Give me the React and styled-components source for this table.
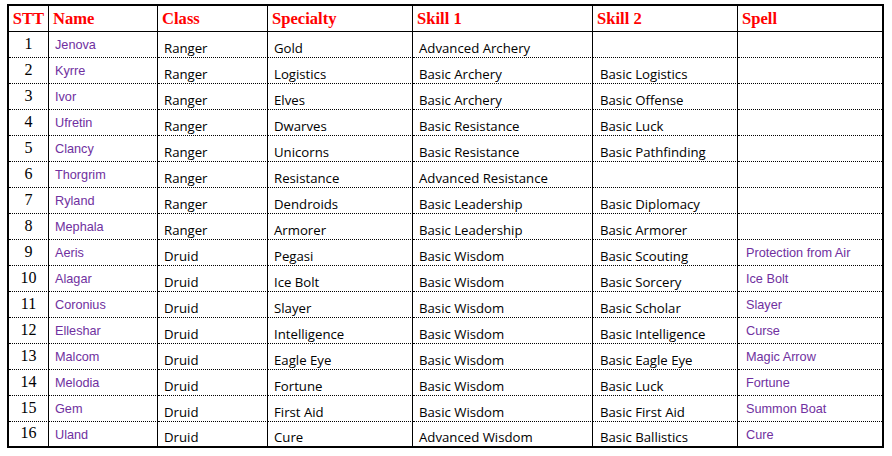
import styled, { createGlobalStyle } from "styled-components";

const GlobalStyle = createGlobalStyle`
  html, body {
    margin: 0;
    padding: 0;
    background: #fff;
  }
`;

const heroes = [
  ["Jenova", "Ranger", "Gold", "Advanced Archery", "", ""],
  ["Kyrre", "Ranger", "Logistics", "Basic Archery", "Basic Logistics", ""],
  ["Ivor", "Ranger", "Elves", "Basic Archery", "Basic Offense", ""],
  ["Ufretin", "Ranger", "Dwarves", "Basic Resistance", "Basic Luck", ""],
  ["Clancy", "Ranger", "Unicorns", "Basic Resistance", "Basic Pathfinding", ""],
  ["Thorgrim", "Ranger", "Resistance", "Advanced Resistance", "", ""],
  ["Ryland", "Ranger", "Dendroids", "Basic Leadership", "Basic Diplomacy", ""],
  ["Mephala", "Ranger", "Armorer", "Basic Leadership", "Basic Armorer", ""],
  ["Aeris", "Druid", "Pegasi", "Basic Wisdom", "Basic Scouting", "Protection from Air"],
  ["Alagar", "Druid", "Ice Bolt", "Basic Wisdom", "Basic Sorcery", "Ice Bolt"],
  ["Coronius", "Druid", "Slayer", "Basic Wisdom", "Basic Scholar", "Slayer"],
  ["Elleshar", "Druid", "Intelligence", "Basic Wisdom", "Basic Intelligence", "Curse"],
  ["Malcom", "Druid", "Eagle Eye", "Basic Wisdom", "Basic Eagle Eye", "Magic Arrow"],
  ["Melodia", "Druid", "Fortune", "Basic Wisdom", "Basic Luck", "Fortune"],
  ["Gem", "Druid", "First Aid", "Basic Wisdom", "Basic First Aid", "Summon Boat"],
  ["Uland", "Druid", "Cure", "Advanced Wisdom", "Basic Ballistics", "Cure"],
];

const headers = ["STT", "Name", "Class", "Specialty", "Skill 1", "Skill 2", "Spell"];

const App = () => {
  return (
    <Page>
      <GlobalStyle />
      <Sheet>
        {headers.map((h, i) => (
          <HeadCell key={h} $center={i === 0} $last={i === headers.length - 1}>
            {h}
          </HeadCell>
        ))}
        {heroes.map((row, r) => {
          const last = r === heroes.length - 1;
          const [name, cls, spec, skill1, skill2, spell] = row;
          return [
            <NumCell key={`n${r}`} $lastRow={last}>
              {r + 1}
            </NumCell>,
            <LinkCell key={`a${r}`} $lastRow={last}>
              {name}
            </LinkCell>,
            <TextCell key={`c${r}`} $lastRow={last}>
              {cls}
            </TextCell>,
            <TextCell key={`s${r}`} $lastRow={last}>
              {spec}
            </TextCell>,
            <TextCell key={`k1${r}`} $lastRow={last}>
              {skill1}
            </TextCell>,
            <TextCell key={`k2${r}`} $lastRow={last} $pad={7}>
              {skill2}
            </TextCell>,
            <LinkCell key={`p${r}`} $lastRow={last} $last $pad={8}>
              {spell}
            </LinkCell>,
          ];
        })}
      </Sheet>
    </Page>
  );
};

export default App;

const Page = styled.div`
  padding: 4px 0 0 7px;
`;

const Sheet = styled.div`
  display: grid;
  grid-template-columns: 40px 109px 110px 145px 180px 145px 144px;
  grid-template-rows: 26px repeat(15, 26px) 24px;
  width: 873px;
  border: 2px solid #000;
`;

const Cell = styled.div`
  display: flex;
  box-sizing: border-box;
  min-width: 0;
  white-space: nowrap;
  overflow: hidden;
  border-right: ${({ $last }) => ($last ? "none" : "1px solid #000")};
  border-bottom: ${({ $lastRow }) => ($lastRow ? "none" : "1px dotted #000")};
`;

const HeadCell = styled(Cell)`
  align-items: flex-end;
  justify-content: ${({ $center }) => ($center ? "center" : "flex-start")};
  padding: 0 0 4px ${({ $center }) => ($center ? "0" : "4px")};
  border-bottom: 1px solid #000;
  font-family: "Liberation Serif", "Times New Roman", serif;
  font-weight: bold;
  font-size: 16.6px;
  line-height: 16px;
  color: #ff0000;
`;

const NumCell = styled(Cell)`
  align-items: center;
  justify-content: center;
  padding-bottom: 2px;
  font-family: "Liberation Serif", "Times New Roman", serif;
  font-size: 16px;
  line-height: 16px;
  color: #000;
`;

const TextCell = styled(Cell)`
  align-items: flex-end;
  padding: 0 0 2px ${({ $pad }) => $pad || 6}px;
  font-family: "Open Sans", "Noto Sans", sans-serif;
  font-size: 13.2px;
  line-height: 14px;
  color: #000;
`;

const LinkCell = styled(Cell)`
  align-items: flex-start;
  padding: 7px 0 0 ${({ $pad }) => $pad || 6}px;
  font-family: "Liberation Sans", Arial, sans-serif;
  font-size: 12.7px;
  line-height: 13px;
  color: #7030a0;
`;
